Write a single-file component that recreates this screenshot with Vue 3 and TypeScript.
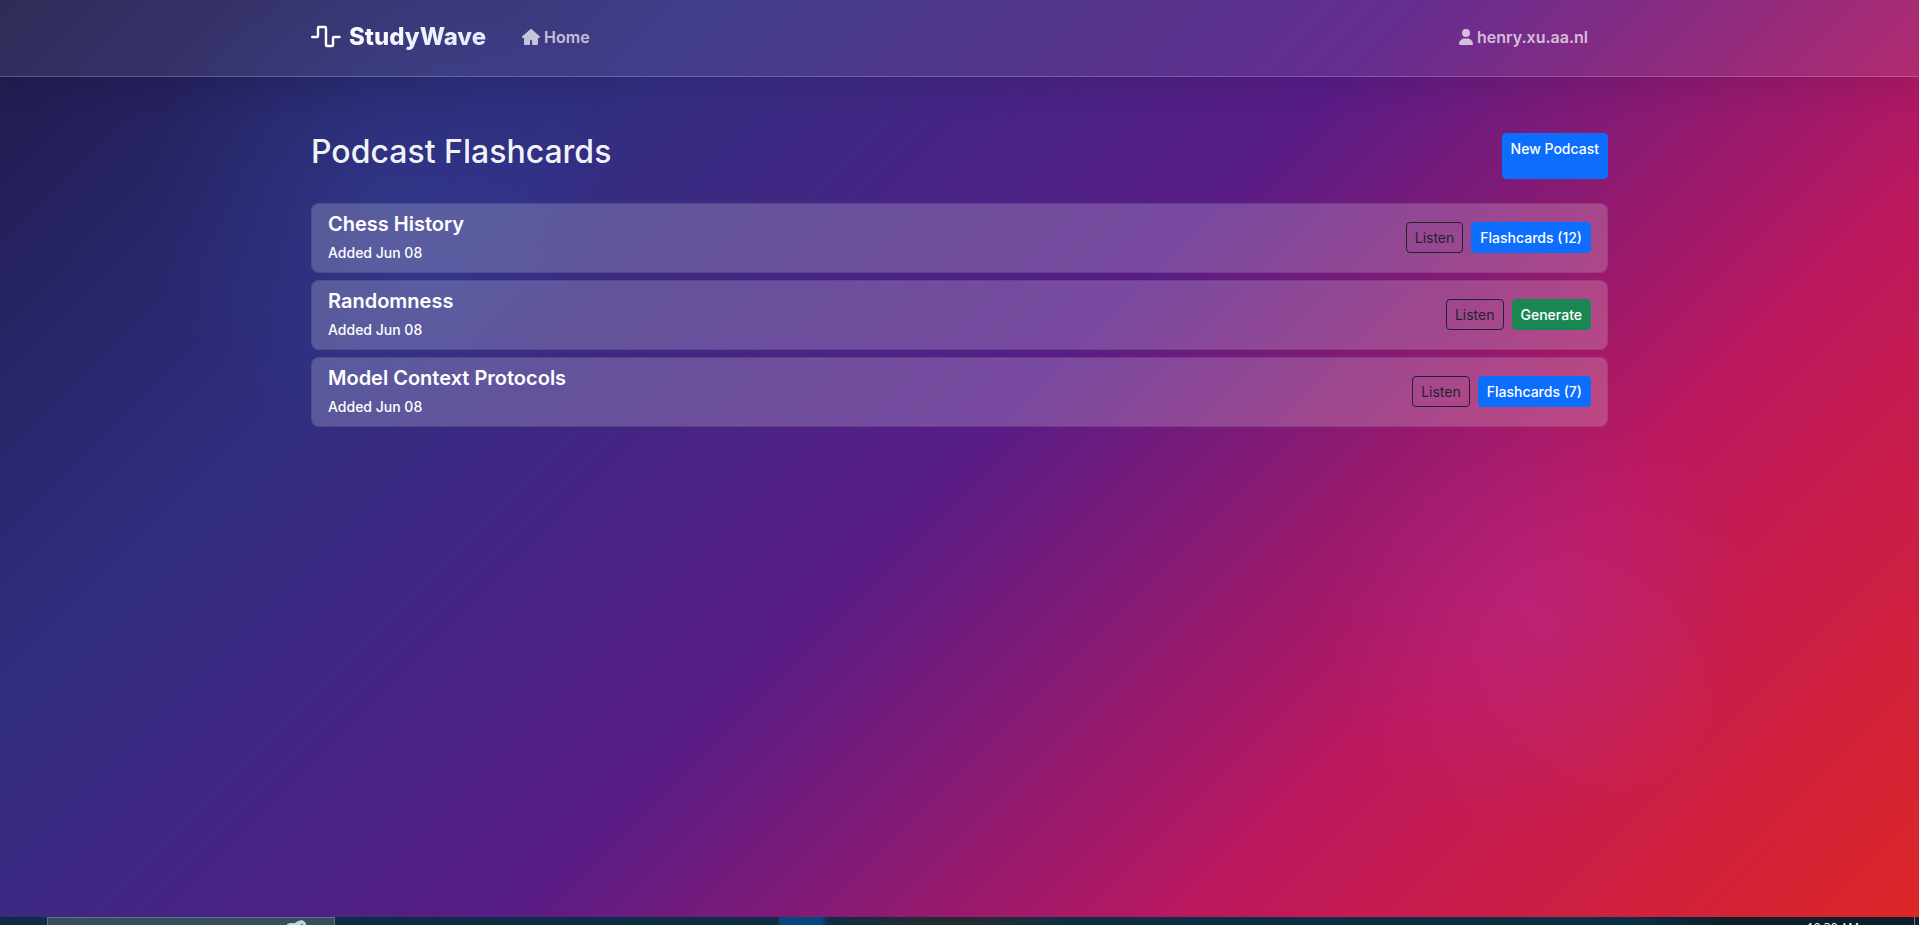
<script setup lang="ts">
interface Podcast {
  title: string
  added: string
  cards: number
}

const podcasts: Podcast[] = [
  { title: 'Chess History', added: 'Jun 08', cards: 12 },
  { title: 'Randomness', added: 'Jun 08', cards: 0 },
  { title: 'Model Context Protocols', added: 'Jun 08', cards: 7 },
]
</script>

<template>
  <div class="screen">
    <div class="page">
      <header class="navbar">
        <nav class="container nav-row">
          <a class="brand" href="#">
            <svg class="wave" viewBox="0 0 30 24" aria-hidden="true">
              <path d="M1.2 12H6Q7 12 7 11V3Q7 2 8 2H14Q15 2 15 3V20Q15 21 16 21H21Q22 21 22 20V13Q22 12 23 12H28.500" />
            </svg>
            <span class="brand-name">StudyWave</span>
          </a>
          <a class="nav-link home" href="#">
            <svg viewBox="0 0 576 512" width="18" height="16" aria-hidden="true">
              <path d="M575.8 255.5c0 18-15 32.100-32 32.100h-32l.7 160.200c0 2.700-.2 5.400-.5 8.100V472c0 22.100-17.900 40-40 40H360c-22.100 0-40-17.900-40-40v-88c0-17.700-14.300-32-32-32h0c-17.700 0-32 14.300-32 32v88c0 22.100-17.900 40-40 40H104c-22.100 0-40-17.900-40-40V287.600H32c-18 0-32-14-32-32.100c0-9 3-17 10-24L266.400 8c7-7 15-8 22-8s15 2 21 7L564.800 231.500c8 7 12 15 11 24z" />
            </svg>
            <span>Home</span>
          </a>
          <a class="nav-link user" href="#">
            <svg viewBox="0 0 448 512" width="14" height="16" aria-hidden="true">
              <path d="M224 256A128 128 0 1 0 224 0a128 128 0 1 0 0 256zm-45.700 48C79.800 304 0 383.800 0 482.300C0 498.700 13.300 512 29.700 512H418.300c16.400 0 29.700-13.300 29.700-29.700C448 383.800 368.200 304 269.700 304H178.300z" />
            </svg>
            <span>henry.xu.aa.nl</span>
          </a>
        </nav>
      </header>

      <main class="container content">
        <div class="heading">
          <h1>Podcast Flashcards</h1>
          <button class="btn primary" type="button">New Podcast</button>
        </div>
        <ul class="list">
          <li v-for="p in podcasts" :key="p.title" class="item">
            <div class="info">
              <h2>{{ p.title }}</h2>
              <p>Added {{ p.added }}</p>
            </div>
            <div class="actions">
              <button class="btn outline" type="button">Listen</button>
              <button v-if="p.cards" class="btn primary" type="button">Flashcards ({{ p.cards }})</button>
              <button v-else class="btn success" type="button">Generate</button>
            </div>
          </li>
        </ul>
      </main>
    </div>

    <footer class="taskbar">
      <div class="search">
        <svg width="24" height="8" viewBox="0 0 24 8" aria-hidden="true">
          <path d="M1 8V6l3-1 5 0 3-2 4-1 3 2 2 4z" fill="#bcd6d8" />
          <circle cx="16" cy="7" r="1" fill="#2c3c44" />
        </svg>
      </div>
      <div class="active-app"></div>
      <div class="clock">10:30 AM</div>
      <div class="edge"></div>
    </footer>
  </div>
</template>

<style>
body {
  margin: 0;
}
</style>

<style scoped>
.screen {
  display: flex;
  flex-direction: column;
  min-height: 100vh;
  font-family: Inter, "Liberation Sans", sans-serif;
  font-size: 16px;
  color: #fff;
}

.page {
  flex: 1;
  background:
    radial-gradient(circle at 20% 22%, rgba(59, 130, 246, 0.12) 0%, transparent 14%),
    radial-gradient(circle at 80% 67%, rgba(168, 85, 247, 0.16) 0%, transparent 13%),
    linear-gradient(135deg, #1e1b4b 0%, #312e81 25%, #581c87 50%, #be185d 75%, #dc2626 100%);
}

.container {
  box-sizing: border-box;
  width: 100%;
  max-width: 1321px;
  margin: 0 auto;
  padding: 0 12px;
}

.navbar {
  background: rgba(255, 255, 255, 0.08);
  border-bottom: 1px solid rgba(255, 255, 255, 0.2);
  box-shadow: 0 8px 32px rgba(0, 0, 0, 0.1);
}

.nav-row {
  display: flex;
  align-items: center;
  height: 76px;
  padding-bottom: 2px;
}

.brand {
  display: flex;
  align-items: center;
  gap: 8px;
  text-decoration: none;
}

.wave {
  width: 30px;
  height: 24px;
  fill: none;
  stroke: #fff;
  stroke-width: 2.4;
  stroke-linecap: round;
}

.brand-name {
  font-size: 24px;
  font-weight: 800;
  line-height: 36px;
  color: transparent;
  background: linear-gradient(135deg, #fff, #e0e7ff);
  background-clip: text;
}

.nav-link {
  display: flex;
  align-items: center;
  gap: 4px;
  font-weight: 600;
  line-height: 24px;
  color: rgba(255, 255, 255, 0.7);
  text-decoration: none;
}

.nav-link svg {
  fill: currentColor;
}

.home {
  margin-left: 36px;
}

.user {
  margin-left: auto;
  margin-right: 20px;
}

.content {
  padding-top: 56px;
}

.heading {
  display: flex;
  justify-content: space-between;
  margin-bottom: 24px;
}

h1 {
  margin: 0 0 8px;
  font-size: 32px;
  font-weight: 500;
  line-height: 38px;
  color: rgba(255, 255, 255, 0.95);
}

.list {
  display: flex;
  flex-direction: column;
  gap: 7px;
  margin: 0;
  padding: 0;
  list-style: none;
}

.item {
  display: flex;
  align-items: center;
  justify-content: space-between;
  padding: 8px 16px 9px;
  background: rgba(255, 255, 255, 0.2);
  border: 1px solid rgba(0, 0, 0, 0.1);
  border-radius: 8px;
}

h2 {
  margin: 0 0 6px;
  font-size: 20px;
  font-weight: 600;
  line-height: 24px;
}

.info p {
  margin: 0;
  font-size: 14px;
  font-weight: 500;
  line-height: 21px;
}

.actions {
  display: flex;
  gap: 8px;
}

.btn {
  display: flex;
  padding: 4px 8px;
  border: 1px solid transparent;
  border-radius: 4px;
  font-family: inherit;
  font-size: 14px;
  font-weight: 500;
  line-height: 21px;
  color: #fff;
  cursor: pointer;
}

.primary {
  background: #0d6efd;
  border-color: #0d6efd;
}

.success {
  background: #198754;
  border-color: #198754;
}

.outline {
  background: transparent;
  border-color: #212529;
  color: #212529;
  font-weight: 400;
}

.taskbar {
  display: flex;
  height: 8px;
  overflow: hidden;
  background: linear-gradient(90deg, #0e2d47 0%, #0d2e45 43%, #242b33 48%, #242b33 51%, #0d2e45 56%, #0d2e45 85%, #0e1e2b 90%);
}

.search {
  box-sizing: border-box;
  display: flex;
  justify-content: flex-end;
  width: 15%;
  margin-left: 47px;
  padding-right: 24px;
  background: #364f60;
  border: 1px solid #60757f;
  border-bottom: 0;
}

.active-app {
  width: 44px;
  margin-left: 444px;
  background: #06477c;
  border-right: 4px solid #0a3861;
}

.clock {
  margin-left: auto;
  margin-right: 55px;
  padding-top: 3px;
  font-family: "Open Sans", sans-serif;
  font-size: 12px;
  line-height: 16px;
}

.edge {
  width: 4px;
  border-left: 1px solid #6f7a83;
}
</style>
